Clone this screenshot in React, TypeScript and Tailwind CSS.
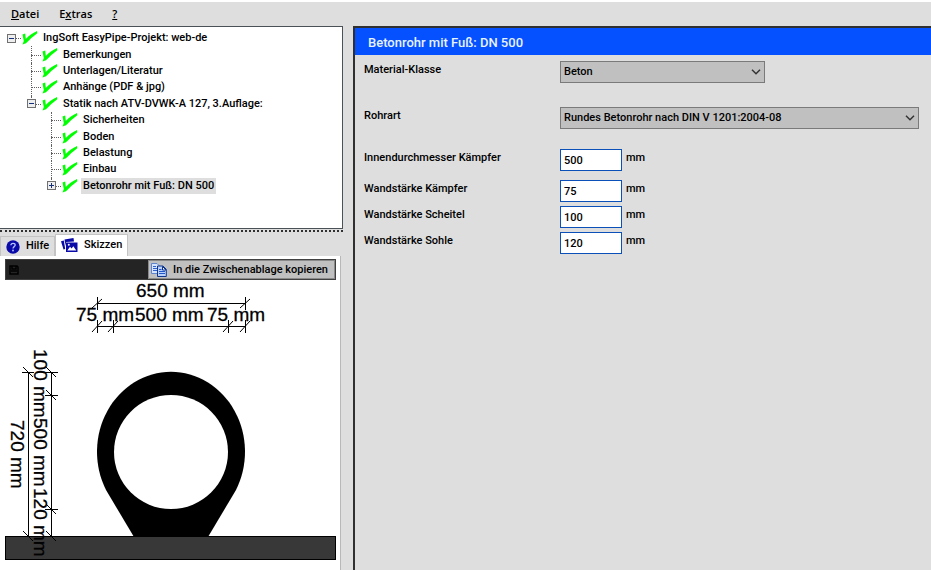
import { clsx } from 'clsx';
import { useState, type ReactNode } from 'react';

interface TreeNode {
  label: string;
  level: number;
  toggle?: 'plus' | 'minus';
  selected?: boolean;
}

const tree: TreeNode[] = [
  { label: 'IngSoft EasyPipe-Projekt: web-de', level: 0, toggle: 'minus' },
  { label: 'Bemerkungen', level: 1 },
  { label: 'Unterlagen/Literatur', level: 1 },
  { label: 'Anhänge (PDF & jpg)', level: 1 },
  { label: 'Statik nach ATV-DVWK-A 127, 3.Auflage:', level: 1, toggle: 'minus' },
  { label: 'Sicherheiten', level: 2 },
  { label: 'Boden', level: 2 },
  { label: 'Belastung', level: 2 },
  { label: 'Einbau', level: 2 },
  { label: 'Betonrohr mit Fuß: DN 500', level: 2, toggle: 'plus', selected: true },
];

function CheckIcon() {
  return (
    <svg viewBox="0 0 16 14" className="ml-px h-3.5 w-4 shrink-0" fill="#00ff00">
      <path d="M.5 3.500 L3.200 2.500 L3.800 8 C7 4.500 10.500 2.300 15 0 L15.300 2.200 C11 5.500 7.500 8.500 4 12.300 L.5 13.500 L1.800 10 Z" />
    </svg>
  );
}

function HelpIcon() {
  return (
    <svg viewBox="0 0 14 14" className="size-3.5">
      <circle cx="7" cy="7" r="6.700" fill="#0a0aa8" />
      <path d="M4.900 5.200 C5 2.600 9.200 2.700 9.200 5.100 C9.200 6.700 7 6.600 7 8.500" fill="none" stroke="#b9c6ff" strokeWidth="1.300" />
      <circle cx="7" cy="10.500" r=".9" fill="#b9c6ff" />
    </svg>
  );
}

function SketchIcon() {
  return (
    <svg viewBox="0 0 17 15" className="h-[15px] w-[17px]" fill="#0a0aa8">
      <path d="M0 3.200 L2.800 2.400 L4.200 11 L2.500 11.400 Z" />
      <path d="M3.500 1.500 L12.500 0 L13 3.500 L5 4 L4.500 8 Z" />
      <path d="M5 4.500 H16.500 V14 H5 Z" />
      <path d="M6.300 12.500 L9 8.800 L10.600 10.600 L12.300 8.200 L15.300 12.500 Z" fill="#fff" />
      <circle cx="7.800" cy="6.800" r="1" fill="#fff" />
    </svg>
  );
}

function CopyIcon() {
  return (
    <svg viewBox="0 0 16 14" className="h-3.5 w-4">
      <path d="M.5 .5 H6 L8.500 3 V10.500 H.5 Z" fill="#d6e4ff" stroke="#5f86cc" />
      <path d="M2 3.500 H5 M2 5.500 H6 M2 7.500 H6" stroke="#2f62d0" />
      <path d="M6.500 3 H12 L15.300 6.300 V13.500 H6.500 Z" fill="#b8d0fa" stroke="#10358c" />
      <path d="M11.500 3.500 V7 H15 Z" fill="#fff" stroke="#10358c" />
      <path d="M8 6.500 H10.500 M8 8.500 H14 M8 10.500 H14" stroke="#2258cc" />
    </svg>
  );
}

function Toggle({ kind }: { kind: 'plus' | 'minus' }) {
  return (
    <button
      type="button"
      aria-label={kind === 'plus' ? 'Aufklappen' : 'Zuklappen'}
      className="relative size-[9px] border border-[#707070] bg-[#eeeeee]"
    >
      <svg viewBox="0 0 7 7" className="block size-[7px]" stroke="#16307a" shapeRendering="crispEdges">
        <path d={kind === 'plus' ? 'M1 3.500 H6 M3.500 1 V6' : 'M1 3.500 H6'} />
      </svg>
    </button>
  );
}

function TreeRow({ node, last }: { node: TreeNode; last: boolean }) {
  return (
    <li className="flex items-center">
      {Array.from({ length: node.level }, (_, i) => (
        <span key={i} className="w-5 shrink-0" />
      ))}
      <span className="relative flex h-full w-5 shrink-0 items-center justify-center">
        {node.level > 0 && (
          <span
            className={clsx(
              'absolute left-[10px] top-0 border-l border-dotted border-[#606060]',
              last || node.toggle ? 'h-1/2' : 'h-full',
            )}
          />
        )}
        <span className="absolute right-0 top-1/2 w-[10px] border-t border-dotted border-[#606060]" />
        {node.toggle && <Toggle kind={node.toggle} />}
      </span>
      <CheckIcon />
      <span className={clsx('ml-[3px] whitespace-nowrap px-0.5 leading-4', node.selected && 'bg-[#dedede]')}>
        {node.label}
      </span>
    </li>
  );
}

interface TabProps {
  icon: ReactNode;
  label: string;
  active: boolean;
  onSelect: () => void;
}

function Tab({ icon, label, active, onSelect }: TabProps) {
  return (
    <button
      type="button"
      role="tab"
      aria-selected={active}
      onClick={onSelect}
      className={clsx(
        'flex items-center gap-1.5 border border-b-0 border-[#c4c4c4] px-[5px]',
        active ? 'h-[22px] bg-white' : 'h-5 bg-[#dedede]',
      )}
    >
      {icon}
      {label}
    </button>
  );
}

// Cross section of the pipe with its dimension lines
function PipeSketch() {
  return (
    <svg viewBox="5 280 331 281" className="block w-full" fontFamily="'Liberation Sans', Arial, sans-serif" fontSize="19">
      <path d="M134 537 L106 490 A74 80 0 1 1 236 490 L208 537 Z" />
      <circle cx="171" cy="452" r="57" fill="#fff" />
      <rect x="5.500" y="536.500" width="330" height="23" fill="#383838" stroke="#000" />

      <g stroke="#000" fill="none">
        <path d="M97 303.500 H245 M97 326.500 H245" />
        <path d="M97.500 297 V310 M245.500 297 V310 M97.500 320 V333 M113.500 320 V333 M228.500 320 V333 M245.500 320 V333" />
        <path d="M92 308 L102 299 M240 308 L250 299 M92 332 L102 321 M108 332 L118 321 M223 332 L233 321 M240 332 L250 321" />
        <path d="M28.500 372 V536 M51.500 372 V536" />
        <path d="M22 372.500 H34 M45 372.500 H58 M45 395.500 H58 M45 509.500 H58" />
        <path d="M23 367 L33 377 M46 367 L56 377 M46 390 L56 400 M46 504 L56 514 M23 531 L33 541 M46 531 L56 541" />
      </g>

      <g stroke="#000" strokeWidth=".3">
        <text x="136" y="297">650 mm</text>
        <text x="76" y="321">75 mm</text>
        <text x="135" y="321">500 mm</text>
        <text x="207" y="321">75 mm</text>
        <text transform="translate(11 420) rotate(90)">720 mm</text>
        <text transform="translate(34 349) rotate(90)">100 mm</text>
        <text transform="translate(34 418) rotate(90)">500 mm</text>
        <text transform="translate(34 488) rotate(90)">120 mm</text>
      </g>
    </svg>
  );
}

interface SelectFieldProps {
  id: string;
  label: string;
  options: string[];
  className?: string;
}

function SelectField({ id, label, options, className }: SelectFieldProps) {
  return (
    <div className="flex items-start">
      <label htmlFor={id} className="w-[196px] shrink-0 pt-px leading-4">
        {label}
      </label>
      <div className={clsx('relative', className)}>
        <select
          id={id}
          className="block h-[22px] w-full appearance-none border border-[#7a7a7a] bg-[#c0c0c0] pl-[3px] pr-6 pt-px outline-none"
        >
          {options.map((option) => (
            <option key={option}>{option}</option>
          ))}
        </select>
        <svg viewBox="0 0 10 6" className="pointer-events-none absolute right-1 top-2 h-1.5 w-2.5" fill="none" stroke="#333" strokeWidth="1.500">
          <path d="M1 .8 L5 4.800 L9 .8" />
        </svg>
      </div>
    </div>
  );
}

function NumberField({ id, label, value }: { id: string; label: string; value: string }) {
  return (
    <div className="flex items-start">
      <label htmlFor={id} className="w-[196px] shrink-0 pt-px leading-4">
        {label}
      </label>
      <input
        id={id}
        type="text"
        defaultValue={value}
        className="h-[22px] w-[62px] border border-[#0a50b8] bg-white px-[3px] outline-none"
      />
      <span className="ml-1 pt-px leading-4">mm</span>
    </div>
  );
}

export default function App() {
  const [tab, setTab] = useState<'hilfe' | 'skizzen'>('skizzen');

  return (
    <div className="flex min-h-screen flex-col border-t-2 border-white bg-[#dedede] font-['Roboto','Liberation_Sans',sans-serif] text-[11px] font-medium text-black">
      <nav className="flex h-6 items-center gap-5 px-[11px] font-['Open_Sans','Noto_Sans',sans-serif] font-semibold">
        <button type="button"><u>D</u>atei</button>
        <button type="button">E<u>x</u>tras</button>
        <button type="button"><u>?</u></button>
      </nav>

      <div className="flex flex-1">
        <aside className="flex w-[343px] shrink-0 flex-col">
          <div className="h-[203px] border-y border-r border-[#4a5258] bg-white">
            <ul className="grid h-[167px] auto-rows-fr pl-px pt-[3px]">
              {tree.map((node, i) => (
                <TreeRow key={node.label} node={node} last={i === tree.length - 1} />
              ))}
            </ul>
          </div>
          <div className="mt-px border-t-2 border-dotted border-[#303030]" />

          <div role="tablist" className="mt-0.5 flex items-end">
            <Tab icon={<HelpIcon />} label="Hilfe" active={tab === 'hilfe'} onSelect={() => setTab('hilfe')} />
            <Tab icon={<SketchIcon />} label="Skizzen" active={tab === 'skizzen'} onSelect={() => setTab('skizzen')} />
          </div>
          <div role="tabpanel" className="mr-0.5 flex-1 border-r border-[#b8b8b8] bg-white pl-[5px] pr-1 pt-[3px]">
            <div className="flex h-[21px] items-center justify-between border border-[#404040] bg-[#242424]">
              <svg viewBox="0 0 10 10" className="ml-[3px] size-2.5" fill="none" stroke="#000" strokeWidth="1.500">
                <path d="M1 1 H8 L9 2 V9 H1 Z M3 1 V4 H7 V1 M2 6 H8" />
              </svg>
              <button type="button" className="flex h-[19px] items-center gap-1.5 border border-[#8a8a8a] bg-[#c0c0c0] pl-0.5 pr-1.5 pt-px">
                <CopyIcon />
                In die Zwischenablage kopieren
              </button>
            </div>
            <PipeSketch />
          </div>
        </aside>

        <main className="ml-2.5 flex-1 border-l-2 border-t-2 border-[#303030]">
          <h1 className="flex h-[27px] items-center bg-[#0550ff] px-[13px] pt-0.5 text-[13px] text-[#e8f4ff]">
            Betonrohr mit Fuß: DN 500
          </h1>
          <form className="flex flex-col pl-[9px] pr-3 pt-1.5">
            <div className="flex flex-col gap-6">
              <SelectField id="material" label="Material-Klasse" options={['Beton']} className="w-[205px]" />
              <SelectField
                id="rohrart"
                label="Rohrart"
                options={['Rundes Betonrohr nach DIN V 1201:2004-08']}
                className="min-w-0 flex-1"
              />
            </div>
            <div className="mt-5">
              <NumberField id="innendurchmesser" label="Innendurchmesser Kämpfer" value="500" />
            </div>
            <div className="mt-[9px] flex flex-col gap-1">
              <NumberField id="kaempfer" label="Wandstärke Kämpfer" value="75" />
              <NumberField id="scheitel" label="Wandstärke Scheitel" value="100" />
              <NumberField id="sohle" label="Wandstärke Sohle" value="120" />
            </div>
          </form>
        </main>
      </div>
    </div>
  );
}
